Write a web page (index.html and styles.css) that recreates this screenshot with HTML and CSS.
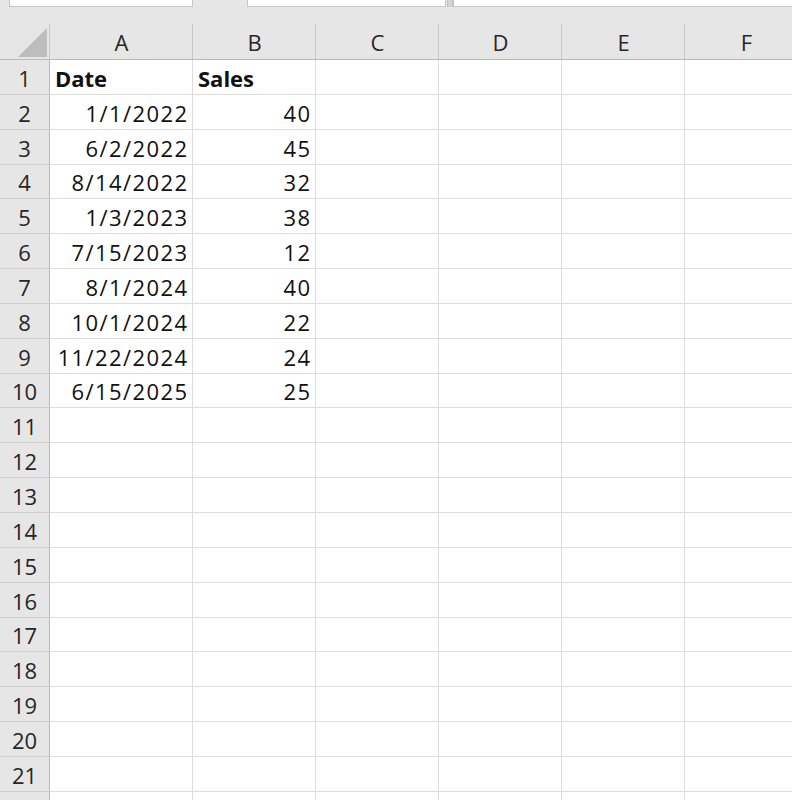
FILE: index.html
```html
<!DOCTYPE html>
<html lang="en">
<head>
<meta charset="utf-8">
<title>Sheet</title>
<link rel="stylesheet" href="styles.css">
</head>
<body>
<div class="app">
  <div class="toolbar">
    <div class="box name-box"></div>
    <div class="box mid-box"></div>
    <div class="divider"></div>
    <div class="box formula-box"></div>
  </div>
  <div class="sheet">
    <div class="corner"><span class="tri"></span></div>
    <div class="colhead">A</div>
    <div class="colhead">B</div>
    <div class="colhead">C</div>
    <div class="colhead">D</div>
    <div class="colhead">E</div>
    <div class="colhead last">F</div>

    <div class="rowhead">1</div><div class="cell bold">Date</div><div class="cell bold">Sales</div><div class="cell"></div><div class="cell"></div><div class="cell"></div><div class="cell"></div>
    <div class="rowhead">2</div><div class="cell num">1/1/2022</div><div class="cell num">40</div><div class="cell"></div><div class="cell"></div><div class="cell"></div><div class="cell"></div>
    <div class="rowhead">3</div><div class="cell num">6/2/2022</div><div class="cell num">45</div><div class="cell"></div><div class="cell"></div><div class="cell"></div><div class="cell"></div>
    <div class="rowhead">4</div><div class="cell num">8/14/2022</div><div class="cell num">32</div><div class="cell"></div><div class="cell"></div><div class="cell"></div><div class="cell"></div>
    <div class="rowhead">5</div><div class="cell num">1/3/2023</div><div class="cell num">38</div><div class="cell"></div><div class="cell"></div><div class="cell"></div><div class="cell"></div>
    <div class="rowhead">6</div><div class="cell num">7/15/2023</div><div class="cell num">12</div><div class="cell"></div><div class="cell"></div><div class="cell"></div><div class="cell"></div>
    <div class="rowhead">7</div><div class="cell num">8/1/2024</div><div class="cell num">40</div><div class="cell"></div><div class="cell"></div><div class="cell"></div><div class="cell"></div>
    <div class="rowhead">8</div><div class="cell num">10/1/2024</div><div class="cell num">22</div><div class="cell"></div><div class="cell"></div><div class="cell"></div><div class="cell"></div>
    <div class="rowhead">9</div><div class="cell num">11/22/2024</div><div class="cell num">24</div><div class="cell"></div><div class="cell"></div><div class="cell"></div><div class="cell"></div>
    <div class="rowhead">10</div><div class="cell num">6/15/2025</div><div class="cell num">25</div><div class="cell"></div><div class="cell"></div><div class="cell"></div><div class="cell"></div>
    <div class="rowhead">11</div><div class="cell"></div><div class="cell"></div><div class="cell"></div><div class="cell"></div><div class="cell"></div><div class="cell"></div>
    <div class="rowhead">12</div><div class="cell"></div><div class="cell"></div><div class="cell"></div><div class="cell"></div><div class="cell"></div><div class="cell"></div>
    <div class="rowhead">13</div><div class="cell"></div><div class="cell"></div><div class="cell"></div><div class="cell"></div><div class="cell"></div><div class="cell"></div>
    <div class="rowhead">14</div><div class="cell"></div><div class="cell"></div><div class="cell"></div><div class="cell"></div><div class="cell"></div><div class="cell"></div>
    <div class="rowhead">15</div><div class="cell"></div><div class="cell"></div><div class="cell"></div><div class="cell"></div><div class="cell"></div><div class="cell"></div>
    <div class="rowhead">16</div><div class="cell"></div><div class="cell"></div><div class="cell"></div><div class="cell"></div><div class="cell"></div><div class="cell"></div>
    <div class="rowhead">17</div><div class="cell"></div><div class="cell"></div><div class="cell"></div><div class="cell"></div><div class="cell"></div><div class="cell"></div>
    <div class="rowhead">18</div><div class="cell"></div><div class="cell"></div><div class="cell"></div><div class="cell"></div><div class="cell"></div><div class="cell"></div>
    <div class="rowhead">19</div><div class="cell"></div><div class="cell"></div><div class="cell"></div><div class="cell"></div><div class="cell"></div><div class="cell"></div>
    <div class="rowhead">20</div><div class="cell"></div><div class="cell"></div><div class="cell"></div><div class="cell"></div><div class="cell"></div><div class="cell"></div>
    <div class="rowhead">21</div><div class="cell"></div><div class="cell"></div><div class="cell"></div><div class="cell"></div><div class="cell"></div><div class="cell"></div>
    <div class="rowhead"></div><div class="cell"></div><div class="cell"></div><div class="cell"></div><div class="cell"></div><div class="cell"></div><div class="cell"></div>
  </div>
</div>
</body>
</html>
```

FILE: styles.css
```css
html, body {
  margin: 0;
  padding: 0;
  background: #ffffff;
  overflow: hidden;
}

.app {
  width: 792px;
  height: 800px;
  overflow: hidden;
  font-family: "Open Sans", "Noto Sans", sans-serif;
  color: #1b1b1b;
}

.toolbar {
  height: 24px;
  background: #e6e6e6;
  display: flex;
  align-items: flex-start;
}

.box {
  background: #ffffff;
  border: 1px solid #c6c6c6;
  border-top: none;
  box-sizing: border-box;
  height: 7px;
}

.name-box {
  margin-left: 9px;
  width: 184px;
}

.mid-box {
  margin-left: 54px;
  width: 199px;
}

.divider {
  width: 6px;
  height: 7px;
  margin-left: 1px;
  background: #d4d4d4;
  border-left: 1px solid #c2c2c2;
  border-right: 1px solid #c2c2c2;
  box-sizing: border-box;
}

.formula-box {
  flex: 1;
  border-right: none;
}

.sheet {
  display: grid;
  grid-template-columns: 50px 143px 123px 123px 123px 123px 123px;
  grid-template-rows: 36px;
  grid-auto-rows: 34.857px;
  width: 808px;
}

.corner {
  background: #e6e6e6;
  border-right: 1px solid #c9c9c9;
  border-bottom: 1px solid #b9b9b9;
  position: relative;
}

.tri {
  position: absolute;
  right: 2px;
  bottom: 2px;
  width: 0;
  height: 0;
  border-left: 29px solid transparent;
  border-bottom: 29px solid #bdbdbd;
}

.colhead {
  background: #e6e6e6;
  border-bottom: 1px solid #b9b9b9;
  position: relative;
  display: flex;
  align-items: center;
  justify-content: center;
  font-size: 22px;
  color: #262626;
  padding-top: 1px;
}

.colhead::after {
  content: "";
  position: absolute;
  right: 0;
  top: 0;
  bottom: 0;
  border-right: 1px solid #c9c9c9;
}

.rowhead {
  background: #e6e6e6;
  border-right: 1px solid #b9b9b9;
  border-bottom: 1px solid #cfcfcf;
  display: flex;
  align-items: flex-end;
  justify-content: center;
  font-size: 22px;
  line-height: 30px;
  color: #262626;
  padding-bottom: 1px;
  box-sizing: border-box;
}

.cell {
  border-right: 1px solid #dcdcdc;
  border-bottom: 1px solid #dcdcdc;
  display: flex;
  align-items: flex-end;
  font-size: 22px;
  line-height: 30px;
  padding: 0 5px 1px 5px;
  box-sizing: border-box;
  white-space: nowrap;
  color: #111111;
}

.cell.num {
  justify-content: flex-end;
  letter-spacing: 1.4px;
  padding-right: 3.6px;
}

.cell.bold {
  font-weight: 700;
}
```
